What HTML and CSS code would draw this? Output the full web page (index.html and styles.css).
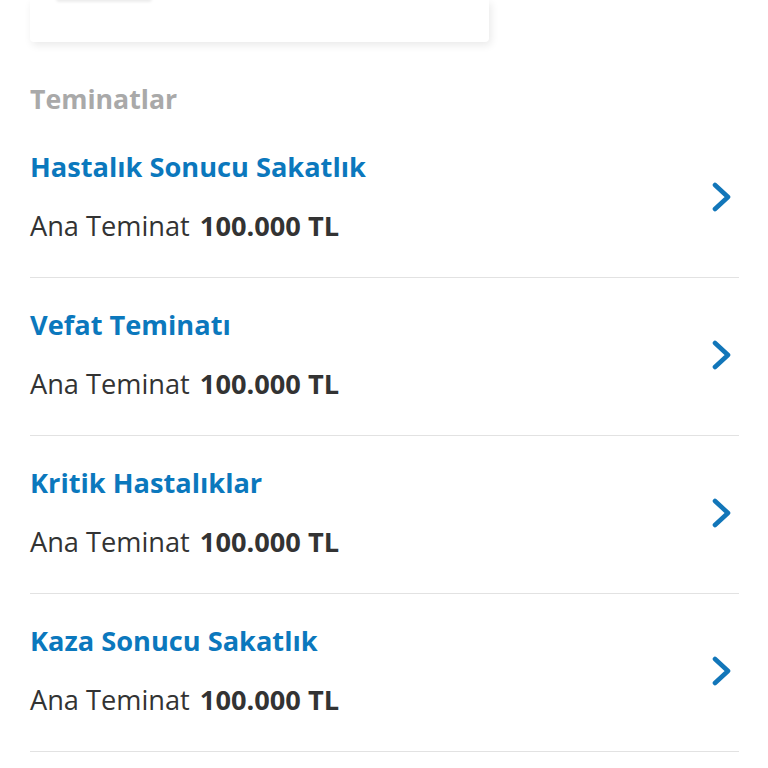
FILE: index.html
```html
<!DOCTYPE html>
<html lang="tr">
<head>
    <meta charset="UTF-8">
    <meta name="viewport" content="width=device-width, initial-scale=1.0">
    <title>Teminatlar</title>
    <link rel="stylesheet" href="styles.css">
</head>
<body>
    <div class="page">
        <div class="summary-card">
            <div class="summary-tab"></div>
        </div>

        <h2 class="section-title">Teminatlar</h2>

        <ul class="coverage-list">
            <li class="coverage-item">
                <div class="coverage-text">
                    <h3>Hastalık Sonucu Sakatlık</h3>
                    <p>Ana Teminat <strong>100.000 TL</strong></p>
                </div>
                <svg class="chevron" width="20" height="30" viewBox="0 0 20 30"><path d="M3 3 L16 15 L3 27" fill="none" stroke="#1276b9" stroke-width="4.6" stroke-linecap="round" stroke-linejoin="round"/></svg>
            </li>
            <li class="coverage-item">
                <div class="coverage-text">
                    <h3>Vefat Teminatı</h3>
                    <p>Ana Teminat <strong>100.000 TL</strong></p>
                </div>
                <svg class="chevron" width="20" height="30" viewBox="0 0 20 30"><path d="M3 3 L16 15 L3 27" fill="none" stroke="#1276b9" stroke-width="4.6" stroke-linecap="round" stroke-linejoin="round"/></svg>
            </li>
            <li class="coverage-item">
                <div class="coverage-text">
                    <h3>Kritik Hastalıklar</h3>
                    <p>Ana Teminat <strong>100.000 TL</strong></p>
                </div>
                <svg class="chevron" width="20" height="30" viewBox="0 0 20 30"><path d="M3 3 L16 15 L3 27" fill="none" stroke="#1276b9" stroke-width="4.6" stroke-linecap="round" stroke-linejoin="round"/></svg>
            </li>
            <li class="coverage-item">
                <div class="coverage-text">
                    <h3>Kaza Sonucu Sakatlık</h3>
                    <p>Ana Teminat <strong>100.000 TL</strong></p>
                </div>
                <svg class="chevron" width="20" height="30" viewBox="0 0 20 30"><path d="M3 3 L16 15 L3 27" fill="none" stroke="#1276b9" stroke-width="4.6" stroke-linecap="round" stroke-linejoin="round"/></svg>
            </li>
        </ul>
    </div>
</body>
</html>
```

FILE: styles.css
```css
body {
    margin: 0;
    background-color: #fff;
    font-family: "Open Sans", "Noto Sans", Arial, sans-serif;
    color: #333;
}
.page {
    padding: 0 29px 0 30px;
}
.summary-card {
    width: 459px;
    height: 42px;
    background-color: #fff;
    border-radius: 0 0 4px 4px;
    box-shadow: 2px 3px 8px rgba(0, 0, 0, 0.09);
    position: relative;
}
.summary-tab {
    position: absolute;
    top: -6px;
    left: 26px;
    width: 96px;
    height: 6px;
    border-radius: 3px;
    box-shadow: 0 2px 3px rgba(0, 0, 0, 0.08);
}
.section-title {
    margin: 39px 0 3px;
    font-size: 26.7px;
    line-height: 36px;
    font-weight: 700;
    color: #a9a9a9;
}
.coverage-list {
    list-style: none;
    margin: 0;
    padding: 0;
}
.coverage-item {
    display: flex;
    align-items: center;
    justify-content: space-between;
    padding: 29px 7px 33px 0;
    border-bottom: 1px solid #e2e2e2;
}
.coverage-text h3 {
    margin: 0;
    font-size: 27.2px;
    line-height: 36px;
    font-weight: 700;
    color: #0b78bd;
}
.coverage-text p {
    margin: 23px 0 0;
    font-size: 27.2px;
    line-height: 36px;
    color: #333;
}
.coverage-text strong {
    margin-left: 3px;
    font-weight: 700;
}
.chevron {
    display: block;
}
```
